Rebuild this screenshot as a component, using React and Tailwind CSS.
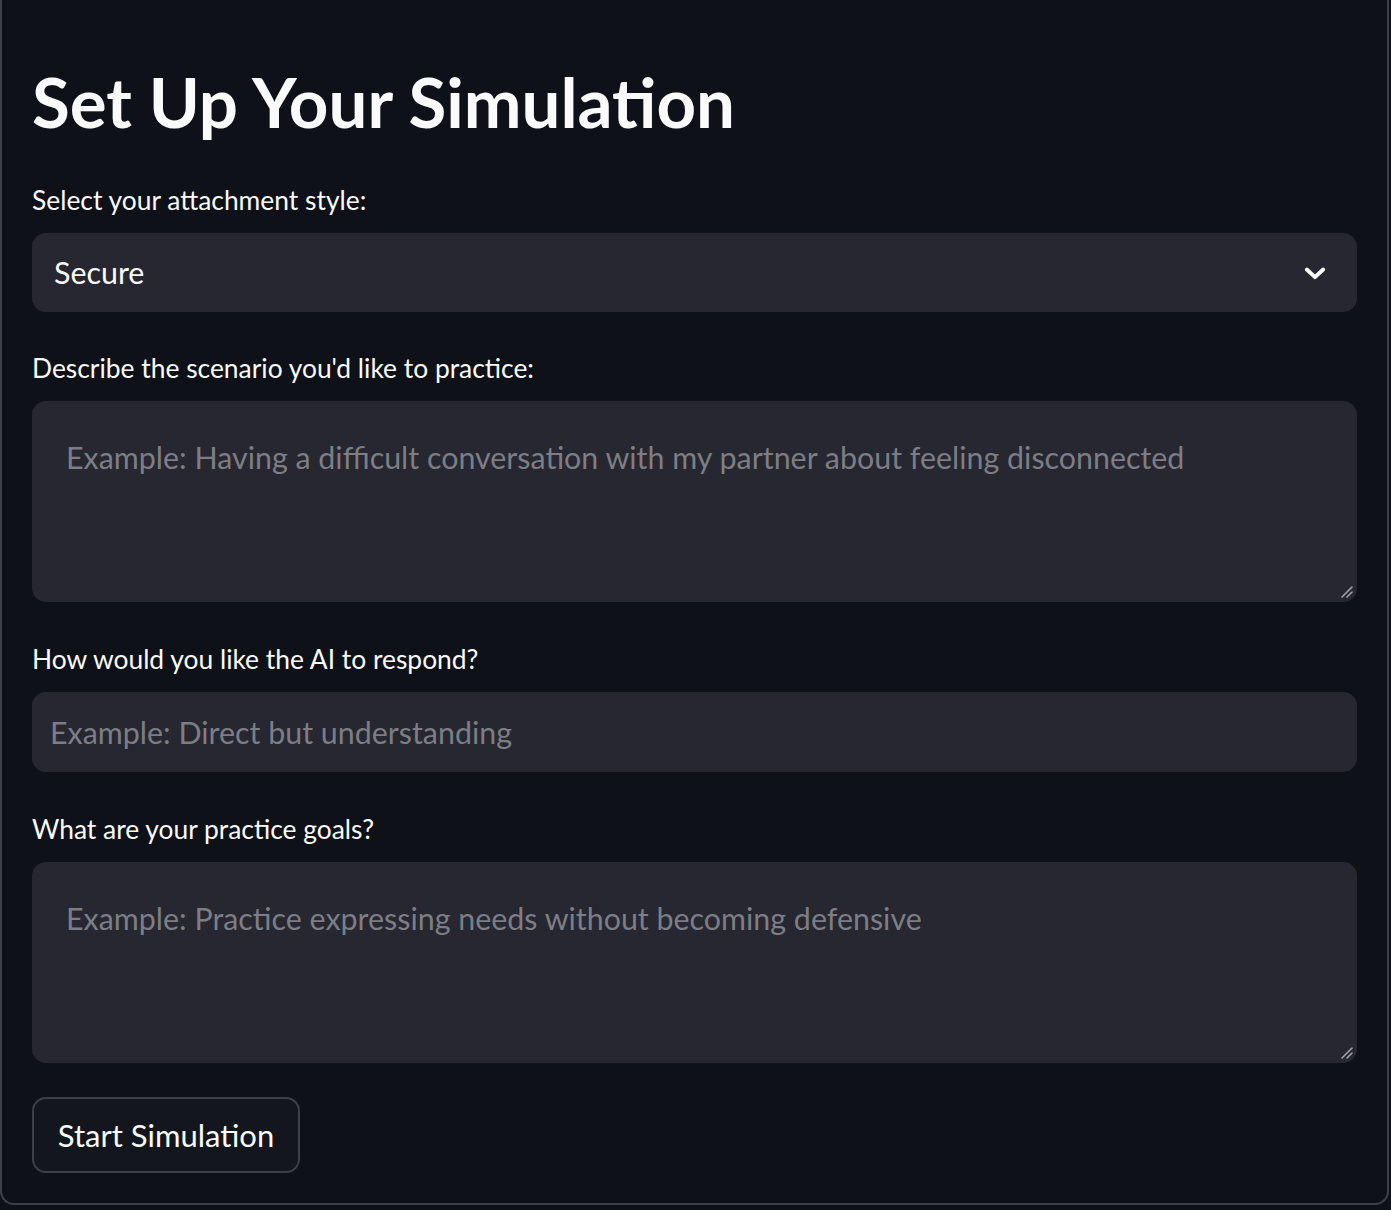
import React from "react";

const Label = ({ children }) => (
  <div className="h-[34px] flex items-center text-[26.4px] text-[#fafafa] mb-[15px]">
    {children}
  </div>
);

// textarea with the little resize grip drawn in the corner
const Area = ({ placeholder, className = "" }) => (
  <div className={"relative " + className}>
    <textarea
      className="block w-full h-[201px] rounded-[14px] bg-[#262730] px-[34px] py-[36px] text-[30.4px] leading-[40px] text-[#fafafa] placeholder:text-[#7d7e85] outline-none resize-none"
      placeholder={placeholder}
    />
    <svg className="absolute right-[3px] bottom-[3px] pointer-events-none" width="14" height="14" viewBox="0 0 14 14" stroke="#a3a4a9" strokeWidth="1.6" strokeLinecap="round">
      <path d="M12 2L2 12" />
      <path d="M12 7L7 12" />
    </svg>
  </div>
);

export default function App() {
  return (
    <div className="min-h-screen bg-[#0e1117] overflow-hidden font-['Lato',sans-serif]">
      <div className="mt-[-14px] w-[1389px] border-2 border-[#3d4047] rounded-[14px] px-[30px] pb-[30px]">
        <h1 className="h-[86px] mt-[70px] mb-[40px] flex items-center text-[69px] font-bold text-[#fafafa] leading-none">
          Set Up Your Simulation
        </h1>

        <Label>Select your attachment style:</Label>
        <div className="h-[79px] rounded-[14px] bg-[#262730] flex items-center justify-between pl-[22px] pr-[28px] mb-[40px]">
          <span className="text-[30.4px] text-[#fafafa]">Secure</span>
          <svg width="28" height="28" viewBox="0 0 24 24" fill="none" stroke="#fafafa" strokeWidth="3.4" strokeLinecap="round" strokeLinejoin="round">
            <path d="M5 9l7 6.5 7-6.5" />
          </svg>
        </div>

        <Label>Describe the scenario you'd like to practice:</Label>
        <Area
          className="mb-[41px]"
          placeholder="Example: Having a difficult conversation with my partner about feeling disconnected"
        />

        <Label>How would you like the AI to respond?</Label>
        <input
          className="block w-full h-[80px] rounded-[14px] bg-[#262730] px-[18px] text-[30.4px] text-[#fafafa] placeholder:text-[#7d7e85] outline-none mb-[41px]"
          placeholder="Example: Direct but understanding"
        />

        <Label>What are your practice goals?</Label>
        <Area
          className="mb-[34px]"
          placeholder="Example: Practice expressing needs without becoming defensive"
        />

        <button className="h-[76px] w-[268px] rounded-[14px] border-2 border-[#3d4047] bg-[#13161d] text-[31px] text-[#fafafa] flex items-center justify-center">
          Start Simulation
        </button>
      </div>
    </div>
  );
}
